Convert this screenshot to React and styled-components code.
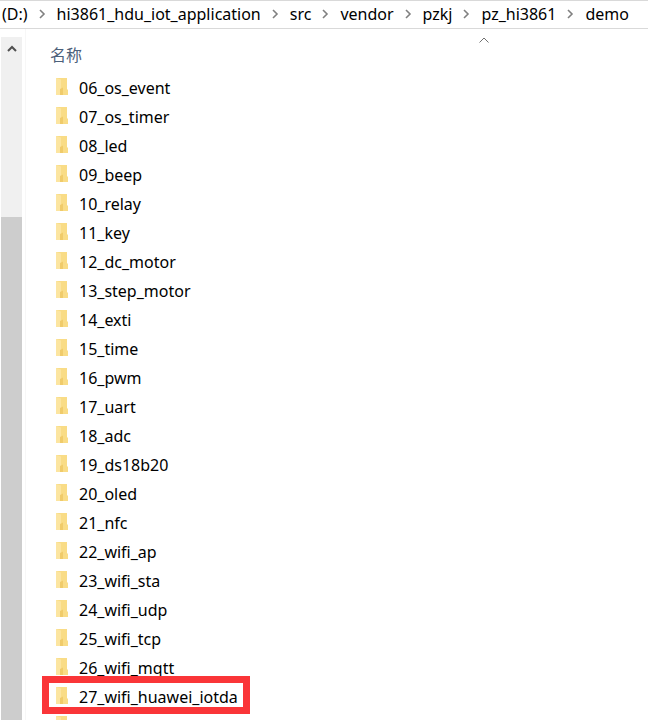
import React from 'react';
import styled, { createGlobalStyle } from 'styled-components';

const GlobalStyle = createGlobalStyle`
  * {
    box-sizing: border-box;
  }

  body {
    margin: 0;
    background: #fff;
    color: #000;
    font-family: 'Noto Sans', 'Noto Sans CJK SC', sans-serif;
    font-size: 16px;
    line-height: 24px;
  }

  button {
    padding: 0;
    border: 0;
    background: none;
    font: inherit;
    cursor: pointer;
  }
`;

const Explorer = styled.div`
  display: flex;
  flex-direction: column;
  height: 100vh;
  overflow: hidden;
`;

const AddressBar = styled.nav`
  flex: none;
  display: flex;
  align-items: center;
  height: 29px;
  padding: 0 2px 2px;
  border-top: 1px solid #d9d9d9;
  border-bottom: 1px solid #d9d9d9;
  white-space: nowrap;
`;

const Crumb = styled.a`
  color: inherit;
  text-decoration: none;
`;

const Separator = styled.svg`
  flex: none;
  width: 7px;
  height: 10px;
  margin: 0 11px;
  fill: none;
  stroke: #808080;
  stroke-width: 1.6;
`;

const Body = styled.div`
  flex: 1;
  display: flex;
  min-height: 0;
`;

const ScrollBar = styled.div`
  flex: none;
  display: flex;
  flex-direction: column;
  width: 21px;
  margin: 8px 3px 0 1px;
  background: #f0f0f0;
`;

const ScrollUp = styled.button`
  flex: none;
  display: flex;
  align-items: center;
  justify-content: center;
  height: 24px;
`;

const UpArrow = styled.svg`
  width: 10px;
  height: 8px;
  fill: none;
  stroke: #505050;
  stroke-width: 2;
`;

const Track = styled.div`
  flex: 1;
  display: flex;
  flex-direction: column;
  padding-top: 156px;
`;

const Thumb = styled.div`
  flex: 1;
  background: #cdcdcd;
`;

const Pane = styled.main`
  flex: 1;
  min-width: 0;
  border-left: 1px solid #f7f7f7;
`;

const ColumnHeader = styled.div`
  position: relative;
  display: flex;
  align-items: center;
  height: 44px;
  padding: 8px 24px 0;
`;

const ColumnName = styled.button`
  color: #4c607a;
`;

const SortMark = styled.svg`
  position: absolute;
  top: 8px;
  left: 453px;
  width: 10px;
  height: 6px;
  fill: none;
  stroke: #707070;
`;

const FileList = styled.ul`
  margin: 0;
  padding: 0 0 0 17px;
  list-style: none;
`;

const FileRow = styled.li`
  position: relative;
  display: flex;
  align-items: center;
  gap: 10px;
  width: max-content;
  height: 29px;
  padding: 0 12px;
`;

const Marker = styled.span`
  position: absolute;
  inset: -6px 0 -3px -1px;
  border: 7px solid #fa3538;
  pointer-events: none;
`;

const FolderSvg = styled.svg`
  flex: none;
  width: 14px;
  height: 20px;
`;

const path = ['(D:)', 'hi3861_hdu_iot_application', 'src', 'vendor', 'pzkj', 'pz_hi3861', 'demo'];

const folders = [
  '06_os_event',
  '07_os_timer',
  '08_led',
  '09_beep',
  '10_relay',
  '11_key',
  '12_dc_motor',
  '13_step_motor',
  '14_exti',
  '15_time',
  '16_pwm',
  '17_uart',
  '18_adc',
  '19_ds18b20',
  '20_oled',
  '21_nfc',
  '22_wifi_ap',
  '23_wifi_sta',
  '24_wifi_udp',
  '25_wifi_tcp',
  '26_wifi_mqtt',
  '27_wifi_huawei_iotda',
  '28_all',
];

const marked = '27_wifi_huawei_iotda';

const FolderIcon = () => (
  <FolderSvg viewBox="0 0 14 20" aria-hidden="true">
    <path d="M1 0h11v11l1 1v5H1z" fill="#f9dc86" />
    <path d="M1 0l5 1.5V17H1z" fill="#fce5a0" />
    <path d="M5 11l3-1.5V17H5z" fill="#f0cb6a" />
  </FolderSvg>
);

export default function App() {
  return (
    <Explorer>
      <GlobalStyle />
      <AddressBar>
        {path.map((name, i) => (
          <React.Fragment key={name}>
            {i > 0 && (
              <Separator viewBox="0 0 7 10" aria-hidden="true">
                <path d="M1 1l4 4-4 4" />
              </Separator>
            )}
            <Crumb href="#">{name}</Crumb>
          </React.Fragment>
        ))}
      </AddressBar>
      <Body>
        <ScrollBar>
          <ScrollUp aria-label="Scroll up">
            <UpArrow viewBox="0 0 10 8">
              <path d="M1 6l4-4 4 4" />
            </UpArrow>
          </ScrollUp>
          <Track>
            <Thumb />
          </Track>
        </ScrollBar>
        <Pane>
          <ColumnHeader>
            <ColumnName>名称</ColumnName>
            <SortMark viewBox="0 0 10 6">
              <path d="M0.5 5.5L5 1l4.5 4.5" />
            </SortMark>
          </ColumnHeader>
          <FileList>
            {folders.map(name => (
              <FileRow key={name}>
                <FolderIcon />
                {name}
                {name === marked && <Marker />}
              </FileRow>
            ))}
          </FileList>
        </Pane>
      </Body>
    </Explorer>
  );
}
